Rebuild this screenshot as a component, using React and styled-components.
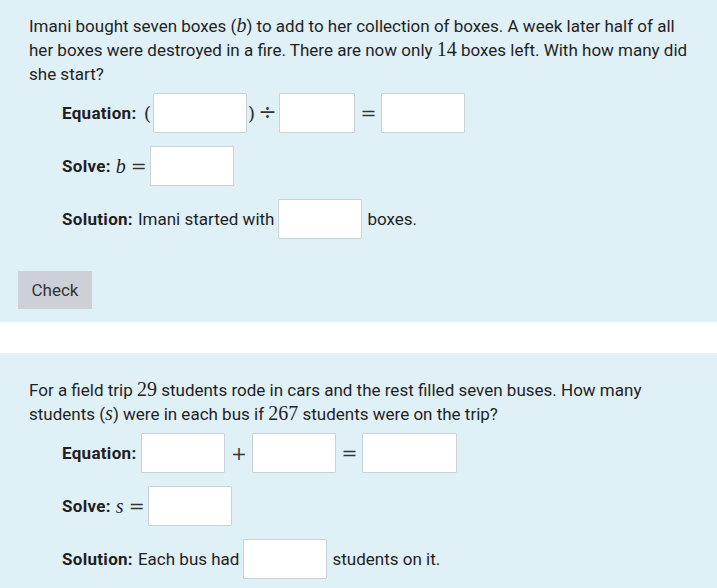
import React from "react";
import styled, { createGlobalStyle } from "styled-components";

const Global = createGlobalStyle`
  html, body { margin: 0; padding: 0; background: #ffffff; }
  body { font-family: Roboto, "Noto Sans", sans-serif; color: #1f1f1f; }
  * { box-sizing: border-box; }
`;

const Page = styled.div`
  display: flex;
  flex-direction: column;
  gap: 31px;
  width: 717px;
`;

const Panel = styled.section`
  background: #dff0f7;
  padding: ${(p) => p.$top}px 17px ${(p) => p.$bottom}px 18px;
  display: flex;
  flex-direction: column;
  align-items: flex-start;
`;

const Prompt = styled.p`
  margin: 0;
  padding-left: 11px;
  font-size: 17px;
  line-height: 24px;
`;

const Num = styled.span`
  font-family: "Liberation Serif", "DejaVu Serif", serif;
  font-size: 20px;
  line-height: 20px;
`;

const Var = styled.span`
  font-family: "Liberation Serif", "DejaVu Serif", serif;
  font-style: italic;
  font-size: 20px;
  line-height: 20px;
`;

const Rows = styled.div`
  display: flex;
  flex-direction: column;
  gap: 13px;
  margin-top: 7px;
  padding-left: 44px;
`;

const Row = styled.div`
  display: flex;
  align-items: center;
  height: 40px;
  font-size: 17px;
`;

const Label = styled.span`
  font-weight: 700;
  letter-spacing: 0.3px;
  margin-right: 5px;
`;

const Text = styled.span`
  margin-right: 4px;
`;

const Op = styled.span`
  display: inline-flex;
  justify-content: ${(p) => (p.$start ? "flex-start" : "center")};
  align-items: center;
  width: ${(p) => p.$w}px;
  padding-left: ${(p) => (p.$start ? 5 : 0)}px;
  font-family: "DejaVu Serif", "Liberation Serif", serif;
  font-size: ${(p) => p.$size || 19}px;
  line-height: 1;
  color: #333;
`;

const Box = styled.input.attrs({ type: "text" })`
  width: ${(p) => p.$w || 84}px;
  height: 40px;
  margin: 0 ${(p) => p.$mr || 0}px 0 0;
  padding: 4px 6px;
  border: 1px solid #c9d2d6;
  border-radius: 1px;
  background: #ffffff;
  font-family: Roboto, sans-serif;
  font-size: 16px;
  outline: none;
`;

const Check = styled.button`
  margin-top: 32px;
  width: 74px;
  height: 38px;
  border: none;
  background: #cdd1d7;
  color: #333;
  font-family: Roboto, sans-serif;
  font-size: 17px;
  cursor: pointer;
`;

export default function App() {
  return (
    <>
      <Global />
      <Page>
        <Panel $top={14} $bottom={13}>
          <Prompt>
            Imani bought seven boxes (<Var>b</Var>) to add to her collection of boxes. A week
            later half of all her boxes were destroyed in a fire. There are now only <Num>14</Num> boxes
            left. With how many did she start?
          </Prompt>
          <Rows>
            <Row>
              <Label>Equation:</Label>
              <Op $w={12}>(</Op>
              <Box $w={94} />
              <Op $w={8}>)</Op>
              <Op $w={24} $size={22}>÷</Op>
              <Box $w={76} />
              <Op $w={26}>=</Op>
              <Box $w={84} />
            </Row>
            <Row>
              <Label>Solve:</Label>
              <Var>b</Var>
              <Op $w={24} $start>=</Op>
              <Box />
            </Row>
            <Row>
              <Label>Solution:</Label>
              <Text>Imani started with</Text>
              <Box $mr={5} />
              <span>boxes.</span>
            </Row>
          </Rows>
          <Check>Check</Check>
        </Panel>
        <Panel $top={25} $bottom={20}>
          <Prompt>
            For a field trip <Num>29</Num> students rode in cars and the rest filled seven buses.
            How many students (<Var>s</Var>) were in each bus if <Num>267</Num> students were on the
            trip?
          </Prompt>
          <Rows>
            <Row>
              <Label>Equation:</Label>
              <Box $w={84} />
              <Op $w={27}>+</Op>
              <Box $w={84} />
              <Op $w={26}>=</Op>
              <Box $w={95} />
            </Row>
            <Row>
              <Label>Solve:</Label>
              <Var>s</Var>
              <Op $w={24} $start>=</Op>
              <Box />
            </Row>
            <Row>
              <Label>Solution:</Label>
              <Text>Each bus had</Text>
              <Box $mr={5} />
              <span>students on it.</span>
            </Row>
          </Rows>
        </Panel>
      </Page>
    </>
  );
}
